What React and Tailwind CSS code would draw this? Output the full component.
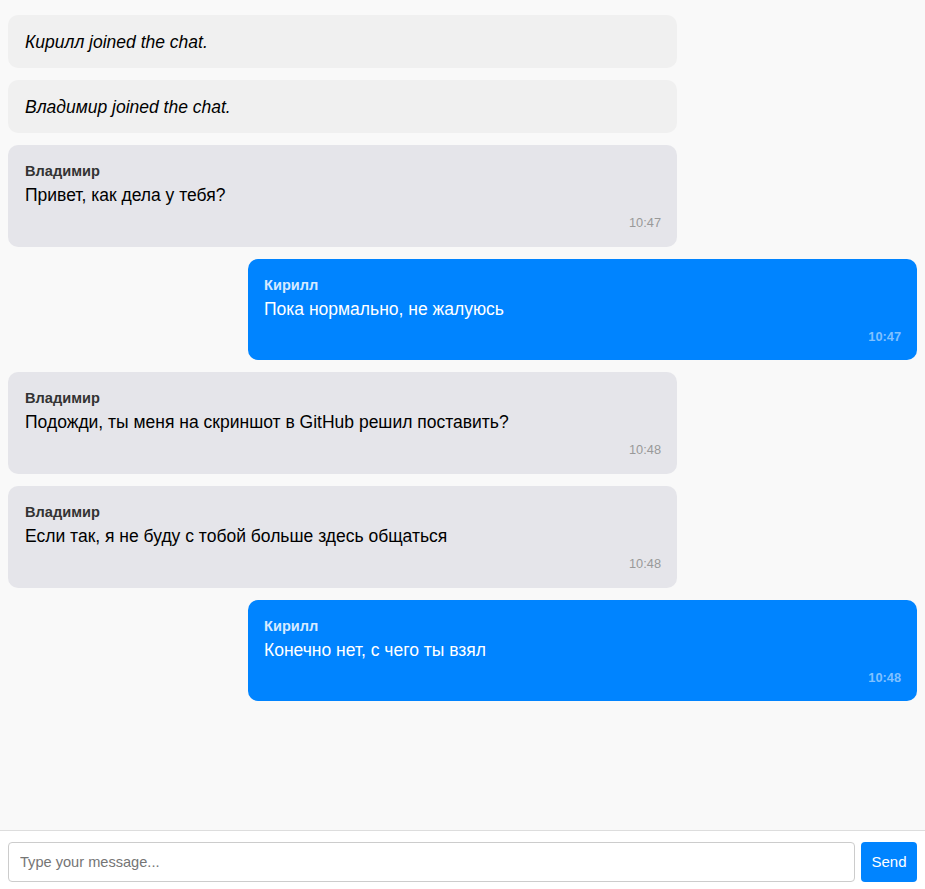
import React from "react";

const font = { fontFamily: '"Liberation Sans", Arial, sans-serif' };

const messages = [
  { type: "system", text: "Кирилл joined the chat." },
  { type: "system", text: "Владимир joined the chat." },
  { type: "other", name: "Владимир", text: "Привет, как дела у тебя?", time: "10:47" },
  { type: "me", name: "Кирилл", text: "Пока нормально, не жалуюсь", time: "10:47" },
  { type: "other", name: "Владимир", text: "Подожди, ты меня на скриншот в GitHub решил поставить?", time: "10:48" },
  { type: "other", name: "Владимир", text: "Если так, я не буду с тобой больше здесь общаться", time: "10:48" },
  { type: "me", name: "Кирилл", text: "Конечно нет, с чего ты взял", time: "10:48" },
];

function Bubble({ m }) {
  if (m.type === "system") {
    return (
      <div className="h-[53px] w-[669px] rounded-[10px] bg-[#f0f0f0] pt-[17px] pb-[15px] pl-[17px] pr-4 text-[17.5px] leading-[21px] italic text-black">
        {m.text}
      </div>
    );
  }
  const me = m.type === "me";
  return (
    <div
      className={`w-[669px] rounded-[10px] pr-4 pt-[17px] pb-[15px] ${
        me ? "self-end bg-[#0084ff] pl-4 text-white h-[101px]" : "bg-[#e5e5ea] pl-[17px] text-black h-[102px]"
      }`}
    >
      <div
        className={`text-[14.6px] leading-[18px] font-bold ${
          me ? "text-[#d6eaff]" : "text-[#333333]"
        }`}
      >
        {m.name}
      </div>
      <div className="mt-[5px] text-[17.5px] leading-[20px]">{m.text}</div>
      <div
        className={`mt-[10px] text-right text-[12.8px] leading-[16px] ${
          me ? "font-bold text-[#80c1ff]" : "text-[#999999]"
        }`}
      >
        {m.time}
      </div>
    </div>
  );
}

export default function App() {
  return (
    <div className="flex h-screen flex-col bg-[#f9f9f9]" style={font}>
      <div className="flex flex-1 flex-col gap-3 overflow-hidden px-2 pt-[15px]">
        {messages.map((m, i) => (
          <Bubble key={i} m={m} />
        ))}
      </div>
      <div className="flex h-[59px] gap-[6px] border-t border-[#dddddd] bg-white px-2 pt-[11px]">
        <input
          className="h-10 flex-1 rounded-[4px] border border-[#cccccc] px-[11px] text-[14.6px] text-black outline-none placeholder:text-[#757575]"
          placeholder="Type your message..."
          style={font}
        />
        <button className="h-10 w-[56px] rounded-[4px] bg-[#0084ff] text-[15px] text-white">
          Send
        </button>
      </div>
    </div>
  );
}
